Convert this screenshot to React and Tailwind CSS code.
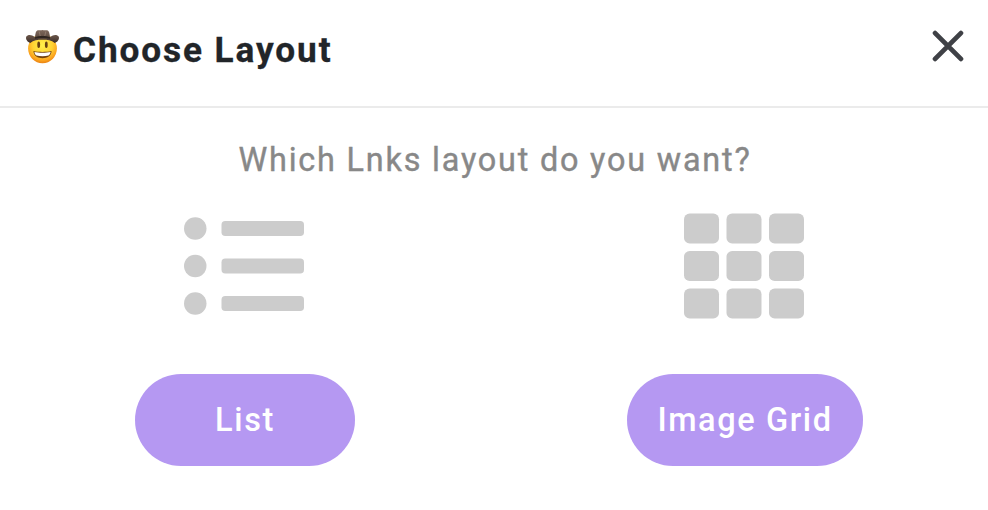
function CowboyIcon() {
  return (
    <svg className="h-[36px] w-[36px] shrink-0" viewBox="0 0 36 36" aria-hidden="true">
      <defs>
        <radialGradient id="face" cx="50%" cy="38%" r="62%">
          <stop offset="0" stopColor="#fff04a" />
          <stop offset="0.55" stopColor="#ffd333" />
          <stop offset="0.85" stopColor="#fba41f" />
          <stop offset="1" stopColor="#ea8312" />
        </radialGradient>
        <linearGradient id="hat" x1="0" y1="0" x2="0" y2="1">
          <stop offset="0" stopColor="#806a5d" />
          <stop offset="0.6" stopColor="#5d4a40" />
          <stop offset="1" stopColor="#3a2c26" />
        </linearGradient>
      </defs>
      <ellipse cx="17.5" cy="19.6" rx="14.4" ry="14.6" fill="url(#face)" />
      <path
        d="M1.2 7.8C2.3 6 5 5.4 7.2 6.6L10 8C10.4 4.3 11 1.7 12.7 1.3C14.4 1 15.5 1.8 17.5 .9C19.5 1.8 20.6 1 22.3 1.3C24 1.7 24.6 4.3 25 8L27.8 6.6C30 5.4 32.7 6 33.8 7.8C34.7 10.5 32.2 13.3 29.8 14C26.5 11.2 22.5 10.8 17.5 10.8C12.5 10.8 8.5 11.2 5.2 14C2.8 13.3 .3 10.5 1.2 7.8Z"
        fill="url(#hat)"
      />
      <path d="M10 8.2C13.5 6.7 21.5 6.7 25 8.2V9.7C21 8.7 14 8.7 10 9.7Z" fill="#2f2520" />
      <path d="M14.2 2.5L15.2 7M20.8 2.5L19.8 7" stroke="#a28d7e" strokeWidth="1.1" opacity=".6" />
      <ellipse cx="13.7" cy="15.8" rx="1.4" ry="3.2" fill="#674012" />
      <ellipse cx="21.3" cy="15.8" rx="1.4" ry="3.2" fill="#674012" />
      <path d="M8.4 22.1C13.5 23.3 21.5 23.3 26.6 22.1C26.3 27 22.2 29.2 17.5 29.2S8.7 27 8.4 22.1Z" fill="#75430d" />
      <path d="M9.4 23C14 24 21 24 25.6 23C25.4 25 24.3 26.1 23.5 26.6C20 27.3 15 27.3 11.5 26.6C10.5 25.9 9.6 24.8 9.4 23Z" fill="#fff" />
    </svg>
  );
}

function CloseIcon() {
  return (
    <svg className="h-[32px] w-[32px]" viewBox="0 0 32 32" fill="none" stroke="#3f4146" strokeWidth="4.8" strokeLinecap="round">
      <path d="M3.1 3.1L28.9 28.9M28.9 3.1L3.1 28.9" />
    </svg>
  );
}

function ListIcon() {
  return (
    <svg className="h-[120px] w-[120px]" viewBox="0 0 512 512" fill="#cccccc">
      {[96, 256, 416].map((y) => (
        <g key={y}>
          <circle cx="48" cy={y} r="48" />
          <rect x="160" y={y - 32} width="352" height="64" rx="16" />
        </g>
      ))}
    </svg>
  );
}

function GridIcon() {
  return (
    <svg className="h-[120px] w-[120px]" viewBox="0 0 512 512" fill="#cccccc">
      {[32, 192, 352].map((y) =>
        [0, 181.33, 362.67].map((x) => (
          <rect key={`${x}-${y}`} x={x} y={y} width="149.33" height="128" rx="24" />
        ))
      )}
    </svg>
  );
}

export default function App() {
  return (
    <div className="h-[510px] w-[988px] overflow-hidden bg-white font-['Roboto',sans-serif]">
      <header className="flex h-[108px] items-start justify-between border-b-2 border-[#ebebeb] pr-6 pl-[25px]">
        <div className="flex items-start pt-[29px]">
          <CowboyIcon />
          <h1 className="ml-[12px] text-[35.2px] leading-[42px] font-bold tracking-[1.9px] text-[#212529] [-webkit-text-stroke:0.3px]">Choose Layout</h1>
        </div>
        <button className="mt-[30px]" aria-label="Close">
          <CloseIcon />
        </button>
      </header>
      <main className="pt-8">
        <p className="pl-[2px] text-center text-[32.4px] leading-[41px] tracking-[1.8px] text-[#888888] [-webkit-text-stroke:0.4px]">
          Which Lnks layout do you want?
        </p>
        <div className="mt-[25px] flex pl-[184px]">
          <ListIcon />
          <div className="ml-[380px]">
            <GridIcon />
          </div>
        </div>
        <div className="mt-12 flex pl-[135px] text-[32.5px] leading-[40px] font-medium tracking-[1.6px] text-white">
          <button className="h-[92px] w-[220px] rounded-full bg-[#b598f2] pb-px">List</button>
          <button className="ml-[272px] h-[92px] w-[236px] rounded-full bg-[#b598f2] pb-px">Image Grid</button>
        </div>
      </main>
    </div>
  );
}
